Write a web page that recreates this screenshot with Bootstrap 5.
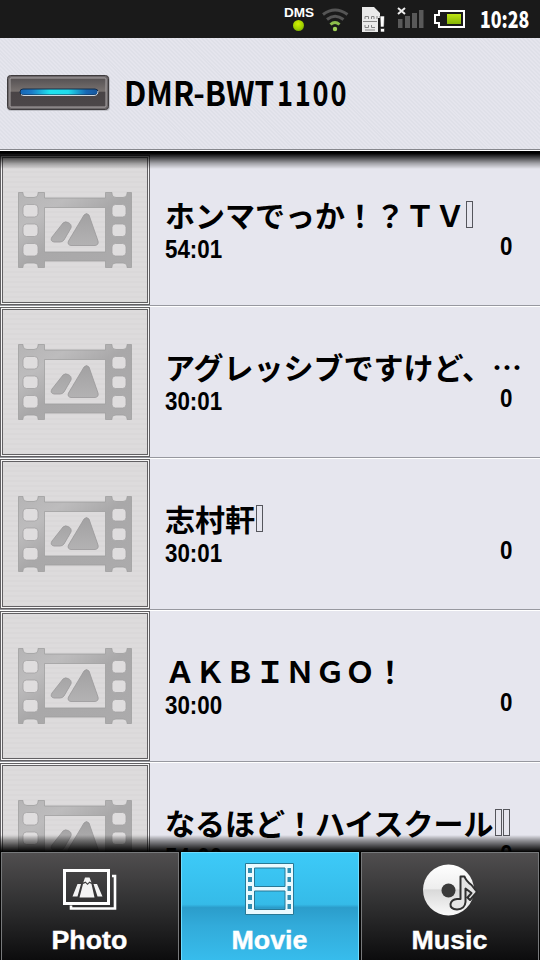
<!DOCTYPE html>
<html lang="ja">
<head>
<meta charset="utf-8">
<meta name="viewport" content="width=device-width, initial-scale=1">
<title>DMR-BWT1100</title>
<link href="https://cdn.jsdelivr.net/npm/bootstrap@5.3.0/dist/css/bootstrap.min.css" rel="stylesheet">
<style>
body{width:540px;height:960px;background:#e6e6ee;color:#000;font-family:"Noto Sans CJK JP",sans-serif;line-height:1}
.squeeze{display:inline-block;white-space:nowrap;transform-origin:0 50%}
.status{height:38px;background:#1a1a1a;color:#fff;padding-right:10px}
.status svg{display:block}
.dms{width:32px;font:700 12px/12px "Liberation Sans",sans-serif;padding-top:7px}
.dms .squeeze{transform:scaleX(1.13);margin-left:-2px}
.led{width:11px;height:11px;border-radius:50%;margin-top:1px;background:radial-gradient(circle at 45% 35%,#d3f000,#9fcf00 55%,#5b8500)}
.clock{width:50px;font-size:23px;font-weight:900;height:38px;line-height:36px}
.clock .squeeze{transform:scaleX(.77)}
.device{height:113px;padding:0 0 2px 6px;background:repeating-linear-gradient(45deg,#dfe0e8 0 1.4px,#e5e5ed 1.4px 2.8px);border-bottom:1px solid #fff;box-shadow:inset 0 -1px #85868c}
.device-name{font-size:34px;font-weight:700;margin:-2px 0 0 13px}
.device-name .squeeze{transform:scaleX(.92);height:44px;line-height:44px}
.device-name .num{transform:scaleX(.8);letter-spacing:2.2px;margin-left:-10px}
.media{height:701px}
.shade-top,.shade-bottom{left:0;right:0;z-index:2}
.shade-top{top:0;height:18px;background:linear-gradient(#000 0 12%,rgba(0,0,0,.68) 38%,rgba(0,0,0,.3) 68%,transparent)}
.shade-bottom{bottom:0;height:17px;background:linear-gradient(transparent,rgba(0,0,0,.35) 30%,rgba(0,0,0,.75) 72%,#000)}
.media-list{padding-top:4px}
.media-item{height:152px;border-bottom:1px solid #fff;box-shadow:inset 0 -1px #97989f}
.thumb{width:150px;height:150px;border:1px solid #626063;padding:1px;background:#f6f5f6;flex:none}
.thumb-in{width:146px;height:146px;border:1px solid #626063;background:repeating-linear-gradient(#dddbdc 0 3px,#dad8d9 3px 5px)}
.info{min-width:0;padding:40px 28px 0 15px}
.title{font-size:30px;font-weight:700;height:38px;line-height:38px;white-space:nowrap}
.tofu{width:7px;height:27px;border:1px solid #55565c;margin-left:1px}
.meta{font:700 26px/30px "Liberation Sans",sans-serif;height:30px;margin-top:1px}
.meta .squeeze{transform:scaleX(.86)}
.count{width:12px;margin-top:-3px}
.tabs{height:108px;background:#050505;padding-left:1px;gap:2px}
.tab{width:178px;border:1px solid #77797b;border-bottom:0;background:linear-gradient(#504e4f,#303031 48%,#0c0c0d);color:#fff;padding-top:9px;text-decoration:none}
.tab.on{border-color:#6edcff;background:linear-gradient(#3dcaf8,#35bbe8 48%,#2b9dcb 51%,#32abda 68%,#37bcec)}
.tab svg{display:block;margin:0 auto;height:56px}
.tab-label{font:700 25px/28px "Liberation Sans",sans-serif;margin-top:8px;-webkit-text-stroke:.4px #fff}
.tab-label .squeeze{transform:scaleX(1.07);transform-origin:50% 50%;margin-left:-2px}
</style>
<script src="https://cdn.jsdelivr.net/npm/bootstrap@5.3.0/dist/js/bootstrap.bundle.min.js"></script>
</head>
<body class="d-flex flex-column overflow-hidden m-0">
<svg width="0" height="0" class="position-absolute" aria-hidden="true">
<defs>
<linearGradient id="metal" x1="0" y1="0" x2="1" y2="1"><stop offset="0" stop-color="#b5b4b5"/><stop offset=".25" stop-color="#bdbcbd"/><stop offset=".5" stop-color="#a9a8a9"/><stop offset="1" stop-color="#acabac"/></linearGradient>
<linearGradient id="peak" x1="0" y1="0" x2="0" y2="1"><stop offset="0" stop-color="#a2a1a2"/><stop offset="1" stop-color="#b3b2b3"/></linearGradient>
<symbol id="film" viewBox="0 0 114 76">
<path fill="url(#metal)" stroke="#a09fa0" stroke-width=".8" fill-rule="evenodd" d="M.5 .5H5V2Q5.500 5.500 9 5.500H16Q20 5.500 20 2V.5H26.500V6H87.500V.5H94V2Q94 5.500 98 5.500H105Q108.500 5.500 109 2V.5H113.500V75.500H109V74Q108.500 71 105 71H98Q94 71 94 74V75.500H87.500V69H26.500V75.500H20V74Q20 71 16 71H9Q5.500 71 5 74V75.500H.5ZM26.500 15.500V60H87.500V15.500Z"/>
<g fill="#dfddde" stroke="#a3a2a3" stroke-width=".8"><rect x="5" y="12.500" width="15" height="12.500" rx="3.500"/><rect x="5" y="32" width="15" height="12.500" rx="3.500"/><rect x="5" y="51.500" width="15" height="12.500" rx="3.500"/><rect x="94" y="12.500" width="14" height="12.500" rx="3.500"/><rect x="94" y="32" width="14" height="12.500" rx="3.500"/><rect x="94" y="51.500" width="14" height="12.500" rx="3.500"/></g>
<path fill="url(#peak)" stroke="#999899" stroke-width=".8" d="M66 23Q68.500 20 71 23L80 49Q81 53 77 53.500H53Q49 53 50.500 49ZM45 31Q47.500 29 50 30.500Q54 32 53 36L46 48Q44.500 50 42 50H36Q31.500 49 34 45Z"/>
</symbol>
</defs>
</svg>

<header class="status d-flex justify-content-end flex-shrink-0">
  <div class="dms d-flex flex-column align-items-center"><span class="squeeze">DMS</span><span class="led"></span></div>
  <svg width="166" height="38" viewBox="315 0 166 38" aria-hidden="true">
    <g fill="none" stroke-width="3"><path d="M324 14.500Q336 5.500 348.500 14.500" stroke="#555"/><path d="M328 19.500Q336 13 344.500 19.500" stroke="#555"/><path d="M331.500 24.500Q336 20.500 340.500 24.500" stroke="#8dbd4b"/></g><circle cx="336" cy="29" r="2.200" fill="#a0d057"/>
    <path fill="#e9e9e9" d="M363 7H375L381 13V18H379V32H363Z"/>
    <path fill="none" stroke="#858585" stroke-width="1" d="M366 19V16.500H369.500V19M372.500 19V16.500H375V19M378 16V19M366 25V27.500H369.500V25M372.500 25V27.500H376M364 21.500H378M366 30H376"/>
    <path fill="#fff" stroke="#1a1a1a" stroke-width=".6" d="M381 16H385.500L385 27H381.500ZM381.500 28.500H385.500V32H381.500Z"/>
    <path stroke="#eee" stroke-width="2" d="M399 8L406 14M406 8L399 14"/>
    <path fill="#595959" d="M399 19H403.500V28H399ZM406 16H411V28H406ZM413 13H418V28H413ZM420 10H424.500V28H420Z"/>
    <path fill="none" stroke="#fff" stroke-width="2" d="M440 11H465V27H440V23H436V15H440Z"/>
    <linearGradient id="charge" x2="0" y2="1"><stop stop-color="#bee414"/><stop offset="1" stop-color="#86b508"/></linearGradient>
    <path fill="url(#charge)" d="M448 14H462V24H448Z"/>
  </svg>
  <div class="clock"><span class="squeeze">10:28</span></div>
</header>

<section class="device d-flex align-items-center flex-shrink-0">
  <svg width="105" height="38" viewBox="0 0 105 38" aria-hidden="true">
    <defs><linearGradient id="body" x2="0" y2="1"><stop stop-color="#555052"/><stop offset=".45" stop-color="#77716f"/><stop offset=".5" stop-color="#494446"/><stop offset="1" stop-color="#4c4749"/></linearGradient>
    <linearGradient id="glow"><stop stop-color="#1765b3"/><stop offset=".15" stop-color="#1c7bc8"/><stop offset=".38" stop-color="#1fe3ee"/><stop offset=".62" stop-color="#20dcec"/><stop offset=".85" stop-color="#1868b4"/><stop offset="1" stop-color="#17559b"/></linearGradient></defs>
    <rect x="1" y="2" width="103" height="35" rx="4" fill="#bfc0c7"/>
    <rect x="1.500" y="1.500" width="101" height="34" rx="3" fill="#6b6668" stroke="#3e3b3d"/>
    <rect x="4" y="4" width="96" height="29" rx="1" fill="url(#body)" stroke="#aaa5a6"/>
    <rect x="14" y="15" width="78" height="6" rx="3" fill="url(#glow)" stroke="#152c49"/>
    <path d="M15 20.500Q16 21.500 18 21.500H88Q92 21.500 92 17" fill="none" stroke="#d3d9df"/>
  </svg>
  <div class="device-name"><span class="squeeze">DMR-BWT</span><span class="squeeze num">1100</span></div>
</section>

<main class="media position-relative overflow-hidden flex-shrink-0">
  <div class="shade-top position-absolute"></div>
  <div class="media-list">
    <article class="media-item d-flex">
      <div class="thumb"><div class="thumb-in d-flex align-items-center justify-content-center"><svg width="114" height="76"><use href="#film"/></svg></div></div>
      <div class="info flex-grow-1"><div class="title d-flex align-items-center">ホンマでっか！？ＴＶ<span class="tofu"></span></div><div class="meta d-flex justify-content-between"><span class="squeeze">54:01</span><span class="squeeze count">0</span></div></div>
    </article>
    <article class="media-item d-flex">
      <div class="thumb"><div class="thumb-in d-flex align-items-center justify-content-center"><svg width="114" height="76"><use href="#film"/></svg></div></div>
      <div class="info flex-grow-1"><div class="title d-flex align-items-center">アグレッシブですけど、…</div><div class="meta d-flex justify-content-between"><span class="squeeze">30:01</span><span class="squeeze count">0</span></div></div>
    </article>
    <article class="media-item d-flex">
      <div class="thumb"><div class="thumb-in d-flex align-items-center justify-content-center"><svg width="114" height="76"><use href="#film"/></svg></div></div>
      <div class="info flex-grow-1"><div class="title d-flex align-items-center">志村軒<span class="tofu"></span></div><div class="meta d-flex justify-content-between"><span class="squeeze">30:01</span><span class="squeeze count">0</span></div></div>
    </article>
    <article class="media-item d-flex">
      <div class="thumb"><div class="thumb-in d-flex align-items-center justify-content-center"><svg width="114" height="76"><use href="#film"/></svg></div></div>
      <div class="info flex-grow-1"><div class="title d-flex align-items-center">ＡＫＢＩＮＧＯ！</div><div class="meta d-flex justify-content-between"><span class="squeeze">30:00</span><span class="squeeze count">0</span></div></div>
    </article>
    <article class="media-item d-flex">
      <div class="thumb"><div class="thumb-in d-flex align-items-center justify-content-center"><svg width="114" height="76"><use href="#film"/></svg></div></div>
      <div class="info flex-grow-1"><div class="title d-flex align-items-center">なるほど！ハイスクール<span class="tofu"></span><span class="tofu"></span></div><div class="meta d-flex justify-content-between"><span class="squeeze">54:00</span><span class="squeeze count">0</span></div></div>
    </article>
  </div>
  <div class="shade-bottom position-absolute"></div>
</main>

<nav class="tabs d-flex flex-shrink-0">
  <a class="tab text-center">
    <svg width="60" height="56" viewBox="60 862 60 56" aria-hidden="true"><g fill="none" stroke="#fff"><rect x="64.500" y="870.500" width="44" height="33" stroke-width="3"/><path stroke-width="2.600" d="M112 876H115V908.500H71V905.500"/></g>
    <path fill="#f4f4f4" d="M85 877.500H89.500L91.500 882.500L89.500 881.500L87.500 883.500L85.500 881.500L83.300 882.500ZM83 884L85.500 883L87.500 885L89.500 883L91.500 884L94.500 897.500H79.500ZM77.500 884H81L77.500 896.500H72.500ZM93.500 884H97L102.500 896.500H97.500Z"/></svg>
    <div class="tab-label"><span class="squeeze">Photo</span></div>
  </a>
  <a class="tab on text-center">
    <svg width="60" height="56" viewBox="240 862 60 56" aria-hidden="true"><path fill="#eafaff" stroke="#287996" stroke-width="1" fill-rule="evenodd" d="M245.500 863.500H293.500V914.500H245.500ZM254.500 868V886.500H285V868ZM254.500 891V909.500H285V891Z"/><path fill="#2f8fb3" d="M248 868H252V873H248ZM248 877H252V882H248ZM248 886H252V891H248ZM248 895H252V900H248ZM248 904H252V909H248ZM287.500 868H291V873H287.500ZM287.500 877H291V882H287.500ZM287.500 886H291V891H287.500ZM287.500 895H291V900H287.500ZM287.500 904H291V909H287.500Z"/></svg>
    <div class="tab-label"><span class="squeeze">Movie</span></div>
  </a>
  <a class="tab text-center">
    <svg width="60" height="56" viewBox="420 862 60 56" aria-hidden="true"><defs><linearGradient id="disc" x2="0" y2="1"><stop stop-color="#fff"/><stop offset=".47" stop-color="#eee"/><stop offset=".5" stop-color="#d9d9d9"/><stop offset="1" stop-color="#fafafa"/></linearGradient></defs><circle cx="448.500" cy="890" r="25.500" fill="url(#disc)"/><circle cx="448.500" cy="890.500" r="7" fill="#3a3a3a"/>
    <path fill="#e4e4e4" stroke="#303030" stroke-width="2" stroke-linejoin="round" d="M460.500 876.500H464.500Q466 881 471.500 885L477 892L470 900L467.500 897.500L471.500 893L465.500 888.500V902Q465 909 457 909.500Q450 909 450.500 904Q451.500 899.500 457 899H460.500Z"/></svg>
    <div class="tab-label"><span class="squeeze">Music</span></div>
  </a>
</nav>
</body>
</html>
